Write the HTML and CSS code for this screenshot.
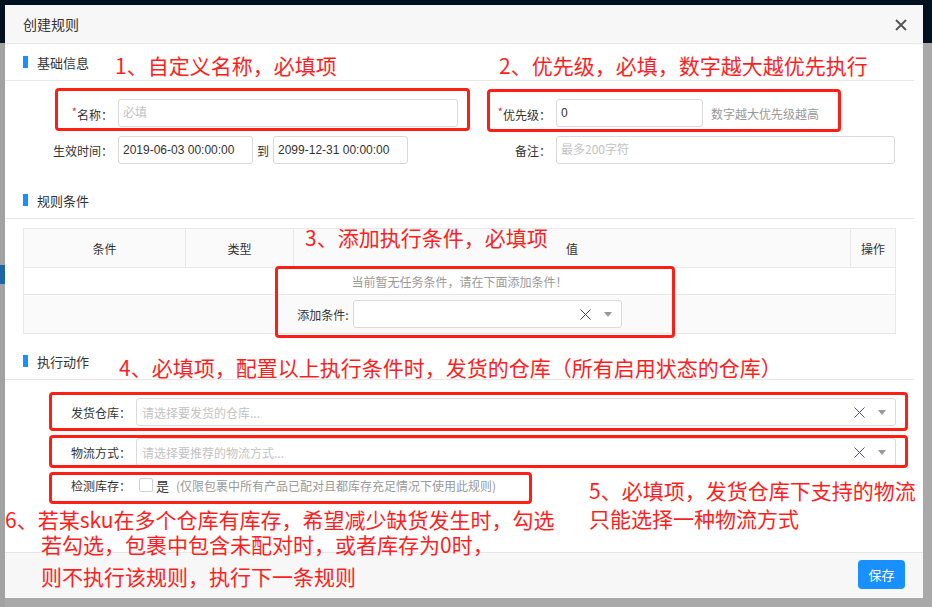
FILE: index.html
```html
<!DOCTYPE html>
<html lang="zh-CN">
<head>
  <meta charset="UTF-8" />
  <meta name="viewport" content="width=device-width, initial-scale=1.0" />
  <title>创建规则</title>
  <link rel="stylesheet" href="styles.css">
</head>
<body>
  <div class="topbar"></div>
  <div class="page-behind">
    <div class="sidebar"><span class="side-active"></span></div>
  </div>

  <div class="modal">
    <div class="modal-header">
      <span class="modal-title">创建规则</span>
      <span class="modal-close">
        <svg width="12" height="12" viewBox="0 0 12 12"><path d="M1 1L11 11M11 1L1 11" stroke="#555" stroke-width="1.8" fill="none"/></svg>
      </span>
    </div>

    <div class="modal-body">
      <div class="section-title"><i></i>基础信息</div>

      <div class="form-line first">
        <div class="col-l">
          <label class="lbl lbl-l"><em>*</em>名称：</label>
          <input class="ipt ipt-name" placeholder="必填" />
        </div>
        <div class="col-r">
          <label class="lbl lbl-r"><em>*</em>优先级：</label>
          <input class="ipt ipt-pri" value="0" />
          <span class="hint">数字越大优先级越高</span>
        </div>
      </div>

      <div class="form-line">
        <div class="col-l">
          <label class="lbl lbl-l">生效时间：</label>
          <input class="ipt ipt-date" value="2019-06-03 00:00:00" />
          <span class="to">到</span>
          <input class="ipt ipt-date" value="2099-12-31 00:00:00" />
        </div>
        <div class="col-r">
          <label class="lbl lbl-r">备注：</label>
          <input class="ipt ipt-remark" placeholder="最多200字符" />
        </div>
      </div>

      <div class="section-title sec-2"><i></i>规则条件</div>

      <table class="cond-table">
        <colgroup>
          <col style="width:162px">
          <col style="width:108px">
          <col style="width:557px">
          <col style="width:45px">
        </colgroup>
        <tr class="row-head">
          <th>条件</th>
          <th>类型</th>
          <th>值</th>
          <th>操作</th>
        </tr>
        <tr class="row-empty">
          <td colspan="4">当前暂无任务条件，请在下面添加条件！</td>
        </tr>
        <tr class="row-add">
          <td colspan="4">
            <div class="add-cond">
              <span class="add-lbl">添加条件:</span>
              <div class="select sel-cond">
                <span class="sel-text"></span>
                <svg class="sel-clear" width="11" height="11" viewBox="0 0 11 11"><path d="M0.5 0.5L10.5 10.5M10.5 0.5L0.5 10.5" stroke="#3a3f6e" stroke-width="1" fill="none"/></svg>
                <span class="sel-arrow"></span>
              </div>
            </div>
          </td>
        </tr>
      </table>

      <div class="section-title sec-3"><i></i>执行动作</div>

      <div class="act-line act-first">
        <label class="lbl lbl-act">发货仓库：</label>
        <div class="select sel-wide">
          <span class="sel-text">请选择要发货的仓库...</span>
          <svg class="sel-clear" width="11" height="11" viewBox="0 0 11 11"><path d="M0.5 0.5L10.5 10.5M10.5 0.5L0.5 10.5" stroke="#55506a" stroke-width="1" fill="none"/></svg>
          <span class="sel-arrow"></span>
        </div>
      </div>

      <div class="act-line act-second">
        <label class="lbl lbl-act">物流方式：</label>
        <div class="select sel-wide">
          <span class="sel-text">请选择要推荐的物流方式...</span>
          <svg class="sel-clear" width="11" height="11" viewBox="0 0 11 11"><path d="M0.5 0.5L10.5 10.5M10.5 0.5L0.5 10.5" stroke="#55506a" stroke-width="1" fill="none"/></svg>
          <span class="sel-arrow"></span>
        </div>
      </div>

      <div class="act-line act-third">
        <label class="lbl lbl-act">检测库存：</label>
        <span class="checkbox"></span>
        <span class="chk-text">是</span>
        <span class="hint chk-hint">(仅限包裹中所有产品已配对且都库存充足情况下使用此规则)</span>
      </div>
    </div>

    <div class="modal-footer">
      <button class="btn-save">保存</button>
    </div>

    <!-- red annotations over the screenshot -->
    <div class="mark mark-a"></div>
    <div class="mark mark-b"></div>
    <div class="mark mark-c"></div>
    <div class="mark mark-d"></div>
    <div class="mark mark-e"></div>
    <div class="mark mark-f"></div>

    <div class="note note-1">1、自定义名称，必填项</div>
    <div class="note note-2">2、优先级，必填，数字越大越优先执行</div>
    <div class="note note-3">3、添加执行条件，必填项</div>
    <div class="note note-4">4、必填项，配置以上执行条件时，发货的仓库（所有启用状态的仓库）</div>
    <div class="note note-5">5、必填项，发货仓库下支持的物流<br>只能选择一种物流方式</div>
    <div class="note note-6a">6、若某sku在多个仓库有库存，希望减少缺货发生时，勾选</div>
    <div class="note note-6b">若勾选，包裹中包含未配对时，或者库存为0时，</div>
    <div class="note note-6c">则不执行该规则，执行下一条规则</div>
  </div>
</body>
</html>
```

FILE: styles.css
```css
* {
  box-sizing: border-box;
}
html, body {
  margin: 0;
  height: 100%;
}
body {
  position: relative;
  overflow: hidden;
  background: #a9a9a9;
  font-family: "Liberation Sans", "Noto Sans CJK SC", sans-serif;
  font-size: 12px;
  color: #333;
}

/* page behind the dialog */
.topbar {
  height: 43px;
  background: #02111f;
}
.page-behind {
  display: flex;
}
.sidebar {
  width: 5px;
  height: 564px;
  background: #a2a2a2;
  padding-top: 222px;
}
.side-active {
  display: block;
  height: 19px;
  background: #1e64a6;
}

/* dialog */
.modal {
  position: absolute;
  left: 5px;
  top: 5px;
  width: 918px;
  height: 593px;
  background: #fff;
  display: flex;
  flex-direction: column;
}
.modal-header {
  height: 39px;
  flex: none;
  display: flex;
  align-items: center;
  justify-content: space-between;
  padding: 0 16px 0 18px;
  background: #f7f7f7;
  border-bottom: 1px solid #e6e6e6;
}
.modal-title {
  font-family: "Noto Sans CJK SC", sans-serif;
  font-size: 14px;
  color: #333;
  margin-top: -1px;
}
.modal-close {
  display: flex;
  margin-top: 2px;
}
.modal-body {
  flex: 1;
  padding-right: 27px;
}
.modal-footer {
  height: 46px;
  flex: none;
  display: flex;
  justify-content: flex-end;
  align-items: flex-start;
  padding: 7px 18px 0 0;
  background: #f7f7f7;
  border-top: 1px solid #e6e6e6;
}
.btn-save {
  width: 47px;
  height: 29px;
  border: none;
  border-radius: 4px;
  background: #1890ff;
  color: #fff;
  font-family: "Noto Sans CJK SC", sans-serif;
  font-size: 13px;
  padding: 0;
}

/* section titles */
.section-title {
  height: 37px;
  margin-right: -18px;
  display: flex;
  align-items: center;
  padding-left: 18px;
  border-bottom: 1px solid #e6e6e6;
  font-family: "Noto Sans CJK SC", sans-serif;
  font-size: 13px;
  color: #333;
}
.section-title i {
  width: 5px;
  height: 12px;
  background: #1890ff;
  margin-right: 9px;
}
.sec-2 {
  margin-top: 18px;
}
.sec-3 {
  margin-top: 9px;
}

/* form */
.form-line {
  display: flex;
  height: 28px;
  margin-top: 9px;
}
.form-line.first {
  margin-top: 18px;
}
.col-l {
  width: 453px;
  display: flex;
  align-items: center;
}
.col-r {
  flex: 1;
  display: flex;
  align-items: center;
}
.lbl {
  flex: none;
  text-align: right;
  font-family: "Noto Sans CJK SC", sans-serif;
  font-size: 12px;
  color: #333;
  margin-right: 5px;
}
.lbl em {
  font-style: normal;
  color: #f5222d;
  font-size: 11px;
  vertical-align: 4px;
}
.lbl-l {
  width: 108px;
}
.lbl-r {
  width: 93px;
}
.ipt {
  height: 28px;
  border: 1px solid #d9d9d9;
  border-radius: 3px;
  padding: 0 4px;
  font-family: "Liberation Sans", "Noto Sans CJK SC", sans-serif;
  font-size: 12px;
  color: #333;
  outline: none;
}
.ipt::placeholder {
  color: #c2c2c2;
  font-family: "Noto Sans CJK SC", sans-serif;
}
.ipt-name {
  width: 340px;
}
.ipt-pri {
  width: 147px;
}
.ipt-date {
  width: 135px;
}
.ipt-remark {
  width: 339px;
}
.to {
  margin: 0 4px;
  font-family: "Noto Sans CJK SC", sans-serif;
}
.hint {
  margin-left: 8px;
  color: #999;
  font-family: "Noto Sans CJK SC", sans-serif;
}

/* condition table */
.cond-table {
  margin: 9px 0 0 18px;
  width: 873px;
  border-collapse: collapse;
  table-layout: fixed;
  font-family: "Noto Sans CJK SC", sans-serif;
  font-size: 12px;
}
.cond-table th,
.cond-table td {
  border: 1px solid #e8e8e8;
  padding: 0;
  text-align: center;
  font-weight: normal;
}
.row-head th {
  height: 39px;
  background: #fafafa;
  color: #333;
}
.row-empty td {
  height: 27px;
  color: #999;
}
.row-add td {
  height: 39px;
  background: #fafafa;
}
.add-cond {
  display: flex;
  justify-content: center;
  align-items: center;
}
.add-lbl {
  color: #333;
  margin-right: 4px;
}

/* selects */
.select {
  height: 28px;
  border: 1px solid #d9d9d9;
  border-radius: 3px;
  background: #fff;
  display: flex;
  align-items: center;
  padding: 0 9px 0 5px;
}
.sel-cond {
  width: 269px;
}
.sel-text {
  flex: 1;
  color: #c2c2c2;
  font-family: "Noto Sans CJK SC", sans-serif;
}
.sel-clear {
  margin-right: 13px;
}
.sel-arrow {
  width: 0;
  height: 0;
  border-left: 4px solid transparent;
  border-right: 4px solid transparent;
  border-top: 5px solid #999;
}

/* action rows */
.act-line {
  display: flex;
  align-items: center;
  height: 28px;
}
.act-first {
  margin-top: 18px;
}
.act-second {
  margin-top: 12px;
}
.act-third {
  margin-top: 5px;
}
.lbl-act {
  width: 126px;
}
.sel-wide {
  flex: 1;
}
.checkbox {
  width: 14px;
  height: 14px;
  margin-left: 3px;
  border: 1px solid #d0d0d0;
  border-radius: 2px;
  background: #fff;
}
.chk-text {
  margin-left: 3px;
  font-family: "Noto Sans CJK SC", sans-serif;
  font-size: 13px;
  color: #333;
}
.chk-hint {
  margin-left: 7px;
}

/* annotations */
.mark {
  position: absolute;
  border: 3px solid #ff1e14;
  border-radius: 4px;
}
.mark-a { left: 50px; top: 83px; width: 415px; height: 43px; }
.mark-b { left: 482px; top: 84px; width: 354px; height: 43px; }
.mark-c { left: 270px; top: 261px; width: 400px; height: 72px; }
.mark-d { left: 44px; top: 387px; width: 859px; height: 39px; }
.mark-e { left: 44px; top: 430px; width: 859px; height: 33px; }
.mark-f { left: 44px; top: 467px; width: 483px; height: 32px; }

.note {
  position: absolute;
  white-space: nowrap;
  font-family: "Noto Sans CJK SC", sans-serif;
  font-size: 21px;
  line-height: 21px;
  color: #ff1e1e;
}
.note-1 { left: 110px; top: 50px; }
.note-2 { left: 494px; top: 50px; }
.note-3 { left: 300px; top: 222px; }
.note-4 { left: 114px; top: 352px; }
.note-5 { left: 584px; top: 474px; line-height: 28px; margin-top: -3px; }
.note-6a { left: 0; top: 504px; }
.note-6b { left: 36px; top: 529px; }
.note-6c { left: 36px; top: 561px; }
```
